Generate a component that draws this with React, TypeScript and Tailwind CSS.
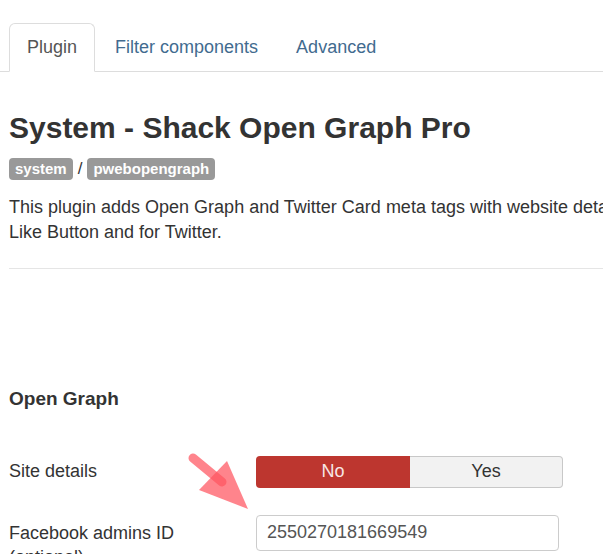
import React from "react";

// プラグイン設定画面（タブ + 見出し + 設定行）。右端は画面外まで続いている想定。

const font = { fontFamily: '"Liberation Sans", Arial, sans-serif' };

function Tabs() {
  return (
    <ul className="mt-[23px] flex border-b border-[#dddddd] pl-[9px]">
      <li className="-mb-px flex h-[49px] items-center rounded-t-[6px] border border-[#dddddd] border-b-white bg-white px-[17px] text-[18px] text-[#555555]">
        Plugin
      </li>
      <li className="-mb-px ml-[2px] flex h-[49px] items-center border border-transparent px-[17px] text-[18px] text-[#426b8f]">
        Filter components
      </li>
      <li className="-mb-px ml-[2px] flex h-[49px] items-center border border-transparent px-[17px] text-[18px] text-[#426b8f]">
        Advanced
      </li>
    </ul>
  );
}

function Badge({ children }: { children: React.ReactNode }) {
  return (
    <span className="inline-flex h-[22px] items-center rounded-[4px] bg-[#999999] px-[6px] text-[15px] font-bold text-white">
      {children}
    </span>
  );
}

function ToggleNoYes() {
  return (
    <div className="flex h-[32px] w-[307px] text-[18px]">
      <div className="flex w-[154px] items-center justify-center rounded-l-[4px] bg-[#bd362f] text-[#f7e6e5]">
        No
      </div>
      <div className="flex flex-1 items-center justify-center rounded-r-[4px] border border-l-0 border-[#c8c8c8] bg-[#f2f2f2] text-[#333333]">
        Yes
      </div>
    </div>
  );
}

function Arrow() {
  return (
    <svg
      className="absolute left-[185px] top-[448px]"
      width="70"
      height="66"
      viewBox="0 0 70 66"
    >
      <line
        x1="8"
        y1="10"
        x2="37"
        y2="34"
        stroke="#ff5560"
        strokeOpacity="0.72"
        strokeWidth="9"
        strokeLinecap="round"
      />
      <polygon points="14,42 42,13 63,61" fill="#ff5560" fillOpacity="0.72" />
    </svg>
  );
}

export default function App() {
  return (
    <div
      className="relative h-[554px] w-[603px] overflow-hidden bg-white text-[#333333]"
      style={font}
    >
      <div className="w-[1100px]">
        <Tabs />

        <div className="pl-[9px]">
          <h1 className="mt-[39px] text-[30px] font-bold leading-[33px] text-[#333333]">
            System - Shack Open Graph Pro
          </h1>

          <div className="mt-[12px] flex items-center gap-[5px]">
            <Badge>system</Badge>
            <span className="text-[17px]">/</span>
            <Badge>pwebopengraph</Badge>
          </div>

          <p className="mt-[13px] text-[18px] leading-[25px]">
            This plugin adds Open Graph and Twitter Card meta tags with website details and a default image for the Facebook
            <br />
            Like Button and for Twitter.
          </p>

          <hr className="mt-[23px] border-t border-[#e5e5e5]" />

          <h3 className="mt-[118px] text-[19px] font-bold leading-[24px]">Open Graph</h3>

          <div className="mt-[45px] flex items-center">
            <label className="w-[247px] text-[18px]">Site details</label>
            <ToggleNoYes />
          </div>

          <div className="mt-[27px] flex items-start">
            <label className="w-[247px] pt-[6px] text-[18px] leading-[24px]">
              Facebook admins ID
              <br />
              (optional)
            </label>
            <div className="flex h-[36px] w-[303px] items-center rounded-[4px] border border-[#cccccc] px-[10px] text-[18px] text-[#555555]">
              2550270181669549
            </div>
          </div>
        </div>
      </div>

      <Arrow />
    </div>
  );
}
